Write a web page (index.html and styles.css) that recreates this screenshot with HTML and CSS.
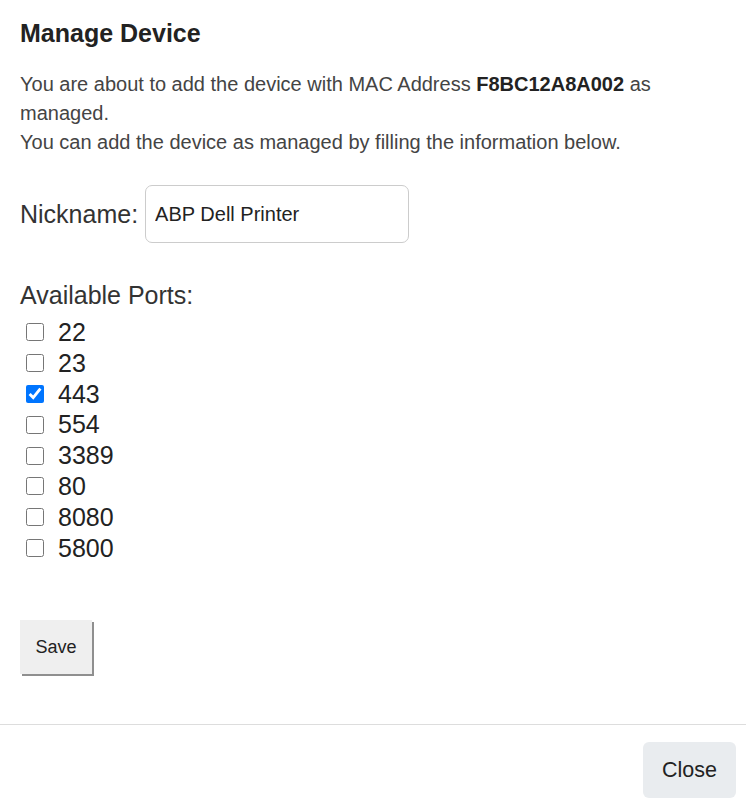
FILE: index.html
```html
<!DOCTYPE html>
<html lang="en">
<head>
    <meta charset="UTF-8">
    <title>Manage Device</title>
    <link rel="stylesheet" href="styles.css">
</head>
<body>
    <div class="modal">
        <!-- Body -->
        <div class="modal-body">
            <h2 class="modal-title">Manage Device</h2>
            <p class="intro">
                You are about to add the device with MAC Address <b>F8BC12A8A002</b> as managed.<br>
                You can add the device as managed by filling the information below.
            </p>

            <div class="field">
                <label for="nickname">Nickname:</label>
                <input type="text" id="nickname" class="text-input" value="ABP Dell Printer">
            </div>

            <div class="ports">
                <div class="ports-title">Available Ports:</div>
                <label class="port"><input type="checkbox"> 22</label>
                <label class="port"><input type="checkbox"> 23</label>
                <label class="port"><input type="checkbox" checked> 443</label>
                <label class="port"><input type="checkbox"> 554</label>
                <label class="port"><input type="checkbox"> 3389</label>
                <label class="port"><input type="checkbox"> 80</label>
                <label class="port"><input type="checkbox"> 8080</label>
                <label class="port"><input type="checkbox"> 5800</label>
            </div>

            <button class="save-btn">Save</button>
        </div>

        <!-- Footer -->
        <div class="modal-footer">
            <button class="close-btn">Close</button>
        </div>
    </div>
</body>
</html>
```

FILE: styles.css
```css
/* General body styling */
body {
    font-family: "Liberation Sans", Arial, sans-serif;
    margin: 0;
    background-color: #fff;
    color: #333;
}

.modal {
    width: 746px;
}

/* Body */
.modal-body {
    padding: 20px 20px 50px;
}

.modal-title {
    font-size: 25px;
    font-weight: bold;
    line-height: 26px;
    margin: 0 0 24px;
    color: #222;
}

.intro {
    font-size: 20px;
    line-height: 29px;
    margin: 0 0 28px;
    color: #444;
}

.intro b {
    color: #222;
}

/* Nickname field */
.field {
    display: flex;
    align-items: center;
    gap: 7px;
    margin-bottom: 38px;
}

.field label {
    font-size: 25px;
    color: #333;
}

.text-input {
    width: 264px;
    height: 58px;
    box-sizing: border-box;
    padding: 0 9px;
    font-family: "Liberation Sans", Arial, sans-serif;
    font-size: 20px;
    color: #222;
    border: 1px solid #ccc;
    border-radius: 7px;
    outline: none;
}

/* Ports list */
.ports {
    display: flex;
    flex-direction: column;
    margin-bottom: 57px;
}

.ports-title {
    font-size: 25px;
    line-height: 28px;
    margin-bottom: 8px;
    color: #333;
}

.port {
    display: flex;
    align-items: center;
    gap: 14px;
    font-size: 25px;
    line-height: 30.8px;
    color: #222;
}

.port input {
    width: 18px;
    height: 18px;
    margin: 0 0 0 6px;
}

/* Buttons */
.save-btn {
    display: block;
    width: 72px;
    height: 54px;
    font-family: "Liberation Sans", Arial, sans-serif;
    font-size: 18px;
    color: #222;
    background-color: #efefef;
    border: none;
    box-shadow: 2px 2px 0 #8f8f8f;
    cursor: pointer;
}

.modal-footer {
    display: flex;
    justify-content: flex-end;
    border-top: 1px solid #ddd;
    padding: 17px 10px 7px;
}

.close-btn {
    width: 93px;
    height: 56px;
    font-family: "Liberation Sans", Arial, sans-serif;
    font-size: 21.5px;
    color: #222;
    background-color: #e9ecef;
    border: none;
    border-radius: 6px;
    cursor: pointer;
}
```
